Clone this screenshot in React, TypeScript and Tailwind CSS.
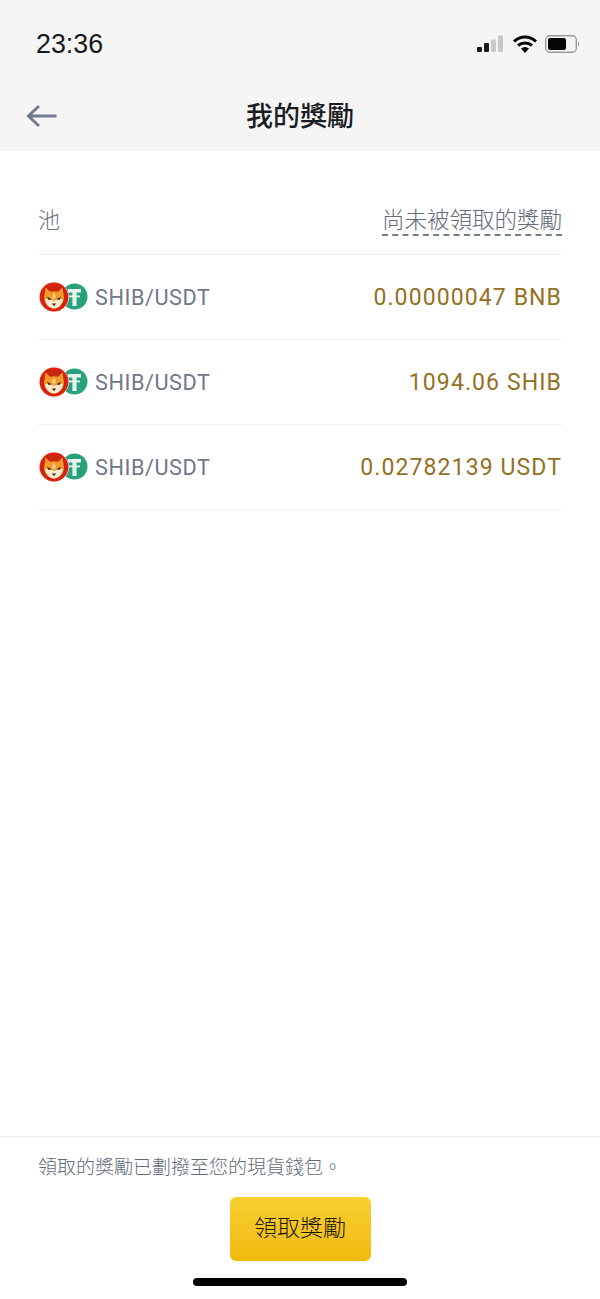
const cjk = `"Noto Sans CJK TC", sans-serif`;
const FONT = `Roboto, "Noto Sans CJK TC", sans-serif`;

function PairIcon() {
  return (
    <svg width="50" height="32" viewBox="0 0 50 32" className="-mt-[2px] shrink-0">
      <circle cx="36.500" cy="15.500" r="13" fill="#27a17c" />
      <path d="M30 8h13v3.400h-4.400V25h-4.200V11.400H30z" fill="#e6f5ef" />
      <path d="M31 14.500h11v1.800H31z" fill="#e6f5ef" />
      <circle cx="16" cy="16" r="15" fill="#fbe6e2" />
      <circle cx="16" cy="16" r="14.400" fill="#e3200f" />
      <circle cx="16" cy="16" r="12.500" fill="#c8260f" />
      <path d="M7.500 6.500l4.500 4.300c2.600-0.900 5.400-0.900 8 0l4.500-4.300 1.500 10c0 5.500-4.500 11-10 11s-10-5.500-10-11z" fill="#f39a2b" />
      <path d="M7 18.500c2.800-1.500 6-0.800 9 1.800 3-2.600 6.200-3.300 9-1.800-0.800 5-4.700 9-9 9s-8.200-4-9-9z" fill="#fbe9cf" />
      <path d="M9 15.800l4.800 2.400-3.300 0.900zM23 15.800l-4.800 2.400 3.300 0.900z" fill="#3a2412" />
      <path d="M13.800 22.500h4.400l-2.200 2.400z" fill="#3a2412" />
      <path d="M16 11.500l-2 4.500 2 2.500 2-2.500z" fill="#fbcf8a" />
    </svg>
  );
}

function Row({ amount }: { amount: string }) {
  return (
    <div className="flex h-[85px] items-center justify-between border-b border-[#f0f0f0] pt-[2px]">
      <div className="flex items-center">
        <PairIcon />
        <span className="ml-[7px] text-[21.700px] tracking-[0.55px] text-[#6f7887]">SHIB/USDT</span>
      </div>
      <span className="text-[23px] tracking-[1.100px] text-[#94701f]">{amount}</span>
    </div>
  );
}

export default function App() {
  return (
    <div className="flex h-[1299px] w-[600px] flex-col overflow-hidden bg-white" style={{ fontFamily: FONT }}>
      <header className="flex h-[151px] flex-col bg-[#f5f5f5]">
        <div className="flex h-[88px] items-center justify-between pl-[36px] pr-[20px]">
          <span className="text-[26.800px] leading-none text-[#16191f]" style={{ fontFamily: `"Liberation Sans", sans-serif` }}>23:36</span>
          <div className="flex items-center">
            <svg width="28" height="18" viewBox="0 0 28 18">
              <rect x="1" y="12" width="5" height="5" rx="1" fill="#1a1a1a" />
              <rect x="8" y="8" width="5" height="9" rx="1" fill="#1a1a1a" />
              <rect x="15" y="4.500" width="5" height="12.500" rx="1" fill="#c8c8c8" />
              <rect x="22" y="0.500" width="5" height="16.500" rx="1" fill="#c8c8c8" />
            </svg>
            <svg width="24" height="18" viewBox="0 0 24 18" className="ml-[9px]">
              <path d="M1 6.500C7.500 0.500 16.500 0.500 23 6.500" fill="none" stroke="#000" strokeWidth="3" />
              <path d="M5 10.500C9 7 15 7 19 10.500" fill="none" stroke="#000" strokeWidth="3" />
              <path d="M8 13.500c2.500-2 5.500-2 8 0l-4 4.500z" fill="#000" />
            </svg>
            <svg width="35" height="18" viewBox="0 0 35 18" className="ml-[8px]">
              <rect x="0.700" y="0.700" width="30.600" height="16.600" rx="4" fill="none" stroke="#9a9a9a" strokeWidth="1.400" />
              <rect x="3" y="3" width="18" height="12" rx="2" fill="#050505" />
              <path d="M33 6.500c1.500 0.500 1.500 4.500 0 5z" fill="#9a9a9a" />
            </svg>
          </div>
        </div>
        <div className="relative flex flex-1 items-start justify-center">
          <svg width="32" height="26" viewBox="0 0 32 26" className="absolute left-[26px] top-[15px]">
            <path d="M30.500 13H3M13 3 2.500 13 13 23" fill="none" stroke="#737c8c" strokeWidth="3" />
          </svg>
          <h1 className="mt-[8px] text-[27px] leading-[38px] text-[#1a1d23]" style={{ fontFamily: cjk, fontWeight: 500 }}>我的獎勵</h1>
        </div>
      </header>

      <main className="flex-1 px-[38px] pt-[44px]">
        <div className="flex h-[60px] items-start justify-between border-b border-[#f0f0f0]">
          <span className="mt-[10px] text-[22px] font-light leading-[32px] text-[#626b7a]">池</span>
          <span className="mt-[11px] border-b-[2px] border-dashed border-[#737c8c] text-[22.500px] font-light leading-[28px] text-[#626b7a]">尚未被領取的獎勵</span>
        </div>
        <Row amount="0.00000047 BNB" />
        <Row amount="1094.06 SHIB" />
        <Row amount="0.02782139 USDT" />
      </main>

      <footer className="flex h-[163px] flex-col border-t border-[#eeeeee] px-[38px]">
        <p className="mt-[17px] text-[19px] font-light leading-[28px] text-[#626b7a]">領取的獎勵已劃撥至您的現貨錢包。</p>
        <button className="mx-auto mt-[15px] h-[64px] w-[141px] rounded-[6px] bg-gradient-to-b from-[#f9d030] to-[#f0b90b] text-[23px] font-light text-[#1f1a0a]">領取獎勵</button>
        <div className="mx-auto mt-[17px] h-[8px] w-[214px] rounded-full bg-black" />
      </footer>
    </div>
  );
}
